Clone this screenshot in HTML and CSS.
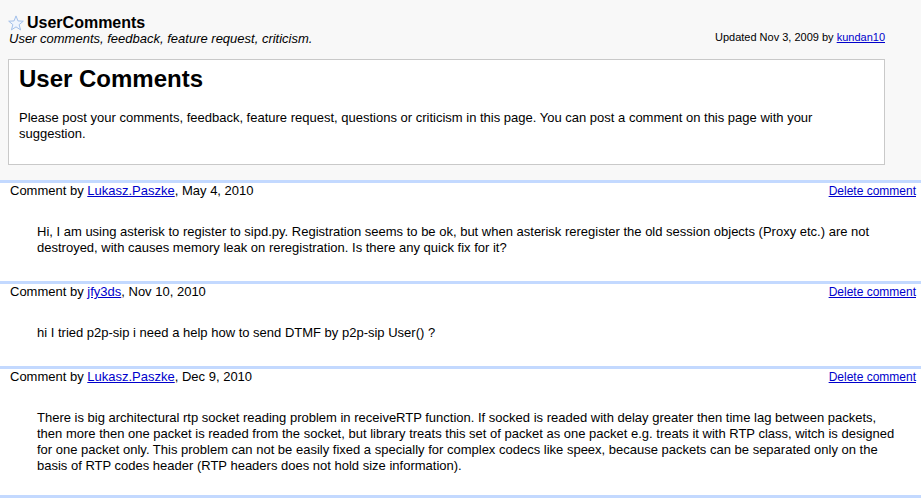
FILE: index.html
```html
<!DOCTYPE html>
<html>
<head>
<meta charset="utf-8">
<title>UserComments</title>
<link rel="stylesheet" href="styles.css">
</head>
<body>
<div class="wiki-head">
  <div class="title-row">
    <svg class="star" width="16" height="16" viewBox="0 0 16 16" aria-hidden="true">
      <path d="M8 0.9 L9.94 5.93 L15.3 6.19 L11.14 9.62 L12.55 14.85 L8 11.9 L3.45 14.85 L4.86 9.62 L0.7 6.19 L6.06 5.93 Z" fill="#f0f5fd" stroke="#a3c0ea" stroke-width="1" stroke-linejoin="round"/>
    </svg>
    <span class="page-title">UserComments</span>
  </div>
  <div class="sub-row">
    <span class="summary">User comments, feedback, feature request, criticism.</span>
    <span class="updated">Updated Nov 3, 2009 by <a href="#">kundan10</a></span>
  </div>
  <div class="content-box">
    <h1 class="content-title">User Comments</h1>
    <p class="content-text">Please post your comments, feedback, feature request, questions or criticism in this page. You can post a comment on this page with your suggestion.</p>
  </div>
</div>

<div class="comment">
  <div class="comment-head">
    <span class="author">Comment by <a href="#">Lukasz.Paszke</a>, May 4, 2010</span>
    <a class="delete" href="#">Delete comment</a>
  </div>
  <div class="comment-body">Hi, I am using asterisk to register to sipd.py. Registration seems to be ok, but when asterisk reregister the old session objects (Proxy etc.) are not destroyed, with causes memory leak on reregistration. Is there any quick fix for it?</div>
</div>

<div class="comment">
  <div class="comment-head">
    <span class="author">Comment by <a href="#">jfy3ds</a>, Nov 10, 2010</span>
    <a class="delete" href="#">Delete comment</a>
  </div>
  <div class="comment-body">hi I tried p2p-sip i need a help how to send DTMF by p2p-sip User() ?</div>
</div>

<div class="comment comment-last">
  <div class="comment-head">
    <span class="author">Comment by <a href="#">Lukasz.Paszke</a>, Dec 9, 2010</span>
    <a class="delete" href="#">Delete comment</a>
  </div>
  <div class="comment-body">There is big architectural rtp socket reading problem in receiveRTP function. If socked is readed with delay greater then time lag between packets, then more then one packet is readed from the socket, but library treats this set of packet as one packet e.g. treats it with RTP class, witch is designed for one packet only. This problem can not be easily fixed a specially for complex codecs like speex, because packets can be separated only on the basis of RTP codes header (RTP headers does not hold size information).</div>
</div>

<div class="comment-end"></div>
</body>
</html>
```

FILE: styles.css
```css
html, body {
  margin: 0;
  padding: 0;
  background: #ffffff;
}

body {
  font-family: Arial, "Liberation Sans", sans-serif;
  font-size: 13px;
  color: #000000;
}

a {
  color: #0000cc;
  text-decoration: underline;
}

.wiki-head {
  background: #f8f8f8;
  padding: 14px 36px 15px 8px;
}

.title-row {
  display: flex;
  align-items: flex-start;
  height: 17px;
}

.star {
  display: block;
  overflow: visible;
  margin-top: 1px;
  margin-right: 3px;
}

.page-title {
  font-size: 16px;
  font-weight: bold;
  line-height: 17px;
}

.sub-row {
  display: flex;
  justify-content: space-between;
  align-items: flex-start;
  line-height: 16px;
}

.summary {
  font-style: italic;
  padding-left: 1px;
}

.updated {
  font-size: 11px;
  line-height: 14px;
  margin-top: -1px;
}

.content-box {
  margin-top: 12px;
  background: #ffffff;
  border: 1px solid #c9c9c9;
  padding: 5px 10px 22px 10px;
}

.content-title {
  margin: 0 0 17px 0;
  font-size: 24px;
  font-weight: bold;
  line-height: 28px;
}

.content-text {
  margin: 0;
  line-height: 16px;
}

.comment {
  border-top: 3px solid #c3d9ff;
  padding: 0 5px 25px 10px;
}

.comment-last {
  padding-bottom: 21px;
}

.comment-head {
  display: flex;
  justify-content: space-between;
  align-items: baseline;
  line-height: 16px;
}

.delete {
  font-size: 12px;
}

.comment-body {
  margin: 25px 11px 0 27px;
  line-height: 16px;
}

.comment-end {
  border-top: 3px solid #c3d9ff;
  height: 10px;
}
```
